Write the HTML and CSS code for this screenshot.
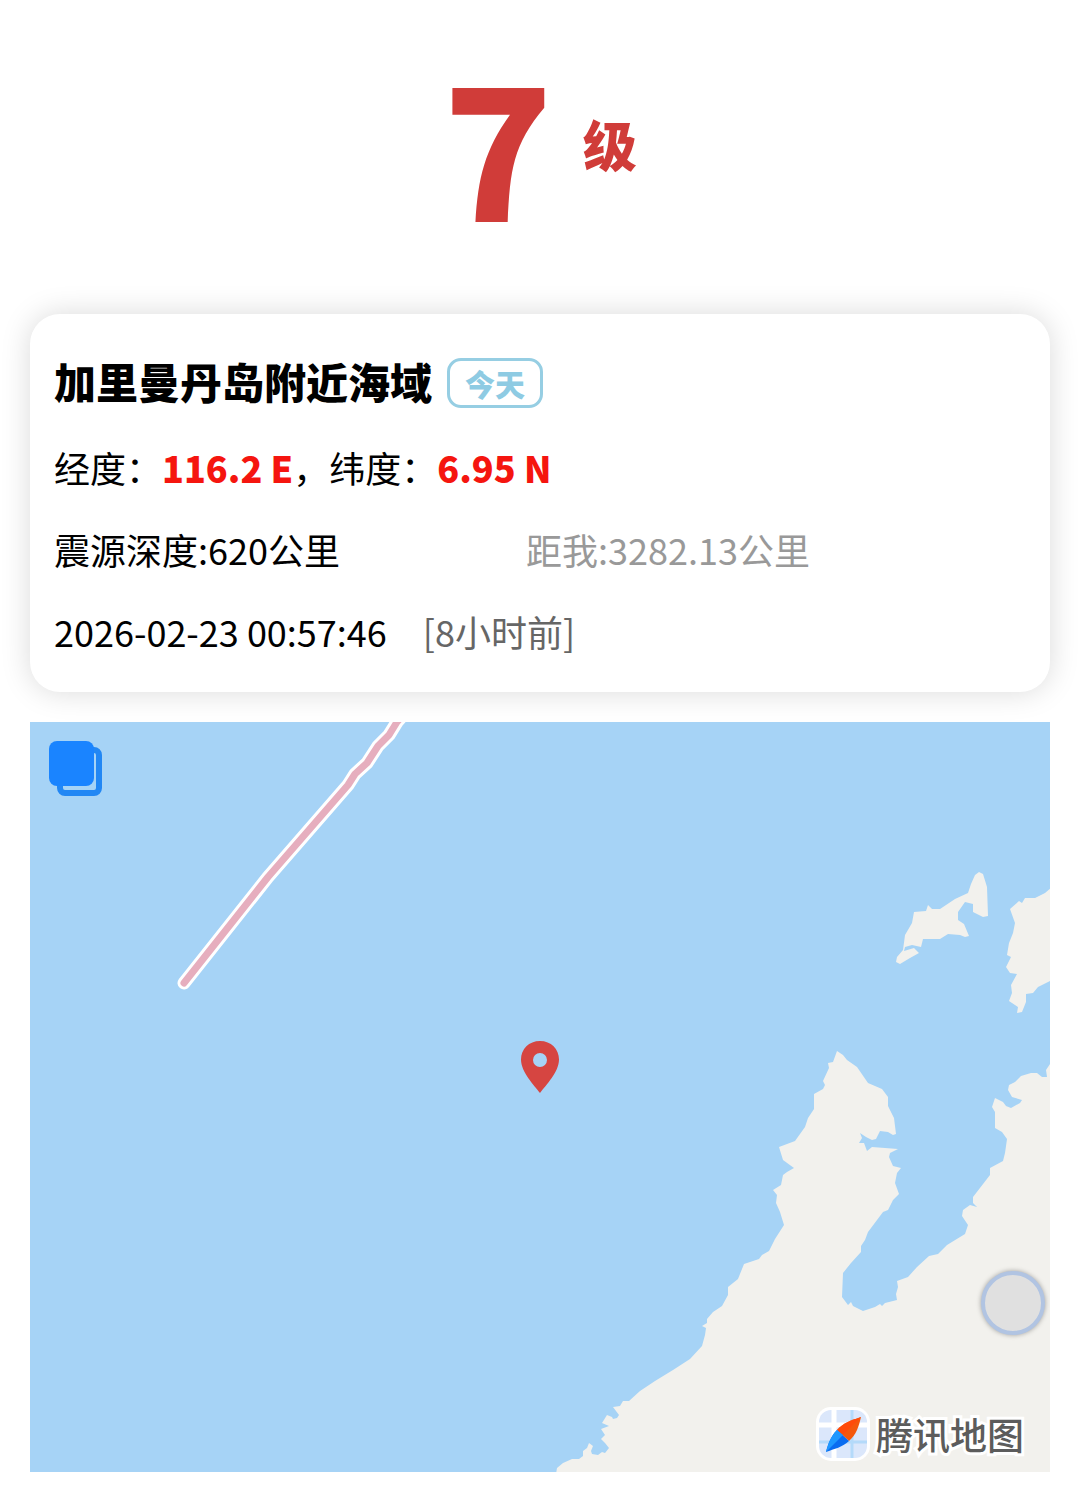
FILE: index.html
```html
<!DOCTYPE html>
<html lang="zh-CN">
<head>
  <meta charset="UTF-8">
  <meta name="viewport" content="width=device-width, initial-scale=1">
  <title>地震详情</title>
  <link rel="stylesheet" href="styles.css">
</head>
<body>

  <header class="level">
    <span class="level-num">7</span>
    <span class="level-unit">级</span>
  </header>

  <main>
    <section class="card">
      <div class="title-row">
        <h1>加里曼丹岛附近海域</h1>
        <span class="tag">今天</span>
      </div>
      <p>经度：<b>116.2 E</b>，纬度：<b>6.95 N</b></p>
      <p class="cols">
        <span>震源深度:620公里</span>
        <span class="distance">距我:3282.13公里</span>
      </p>
      <p class="time">
        <span>2026-02-23 00:57:46</span>
        <span class="ago">[8小时前]</span>
      </p>
    </section>

    <section class="map">
      <svg class="map-canvas" viewBox="30 722 1020 750" preserveAspectRatio="xMidYMid slice" aria-hidden="true">
        <!-- mainland -->
        <path class="land" d="M556 1474L557 1468L563 1463L572 1459L579 1459L583 1456L583 1451L587 1448L589 1443L593 1446L591 1451L592 1454L598 1455L602 1452L605 1453L609 1448L605 1443L601 1439L605 1435L601 1429L609 1426L602 1423L607 1415L612 1417L613 1419L617 1418L619 1415L613 1407L620 1406L623 1401L629 1401L640 1391L655 1381L673 1370L690 1359L702 1346L705 1335L706 1328L702 1326L707 1323L707 1319L713 1312L722 1306L728 1295L728 1287L738 1279L744 1264L759 1259L762 1255L769 1251L775 1239L784 1225L780 1212L776 1203L777 1195L773 1190L781 1185L783 1175L787 1172L794 1168L783 1160L779 1147L795 1141L805 1127L808 1118L814 1109L814 1094L823 1089L825 1085L823 1081L829 1068L828 1063L833 1062L837 1051L843 1055L847 1060L857 1067L868 1083L882 1089L888 1097L888 1106L894 1118L896 1134L893 1135L888 1132L880 1131L876 1139L872 1140L866 1137L860 1133L862 1138L859 1143L864 1143L867 1151L872 1147L898 1149L890 1153L889 1157L893 1166L901 1168L897 1173L895 1183L899 1194L893 1200L888 1210L883 1212L877 1220L868 1232L865 1240L861 1246L861 1252L851 1263L843 1273L842 1297L848 1305L851 1302L853 1306L863 1311L875 1307L880 1304L882 1306L885 1303L897 1300L896 1294L898 1287L897 1281L908 1277L917 1267L929 1256L938 1254L947 1245L965 1234L968 1225L962 1216L963 1210L970 1205L977 1207L973 1203L973 1197L990 1175L990 1168L1003 1161L1005 1153L1007 1139L1002 1132L995 1128L995 1112L992 1107L995 1098L1003 1102L1006 1106L1011 1108L1020 1103L1022 1100L1012 1097L1008 1090L1009 1085L1015 1082L1021 1076L1031 1073L1037 1073L1042 1077L1047 1077L1046 1070L1050 1064L1052 1474Z"/>
        <!-- islands -->
        <path class="land" d="M897 957L903 950L905 935L912 923L914 912L926 911L928 905L932 909L940 909L955 899L968 893L971 884L975 875L979 872L983 874L987 887L988 916L983 917L973 912L973 904L965 902L958 912L958 920L964 924L969 936L965 937L960 935L948 934L940 939L923 939L921 947L912 945L905 947L904 951L914 948L919 953L910 958L900 964L896 962Z"/>
        <path class="land" d="M1052 887L1045 893L1035 898L1025 898L1022 903L1019 901L1010 909L1015 923L1013 933L1009 943L1007 955L1011 957L1006 967L1010 973L1017 974L1011 985L1012 993L1009 1001L1018 1007L1017 1013L1022 1012L1026 1002L1026 994L1033 993L1038 987L1052 980Z"/>
        <g class="fault">
          <path class="fault-edge" d="M184 983L268 877L348 785L355 774L367 763L378 746L389 735L397 722L404 714"/>
          <path class="fault-line" d="M184 983L268 877L348 785L355 774L367 763L378 746L389 735L397 722L404 714"/>
        </g>
      </svg>

      <button class="layers" type="button" aria-label="切换图层">
        <svg viewBox="0 0 54 56" width="54" height="56">
          <rect x="11" y="9" width="39" height="43" rx="5" fill="none" stroke="#2287f4" stroke-width="6"/>
          <rect x="0" y="0" width="45" height="45" rx="8" fill="#1a84ff"/>
        </svg>
      </button>

      <svg class="pin" viewBox="0 0 38 52" width="38" height="52" aria-hidden="true">
        <path fill="#d64541" fill-rule="evenodd" d="M19 0C8 0 0 8 0 18.500C0 31 13 44 19 52C25 44 38 31 38 18.500C38 8 30 0 19 0ZM19 12A7 7 0 1 1 19 26A7 7 0 1 1 19 12Z"/>
      </svg>

      <button class="float-btn" type="button" aria-label="更多"></button>

      <div class="brand">
        <svg viewBox="0 0 54 54" width="54" height="54" aria-hidden="true">
          <defs>
            <clipPath id="tile"><rect x="3" y="3" width="48" height="48" rx="12"/></clipPath>
          </defs>
          <rect width="54" height="54" rx="15" fill="#fff"/>
          <g clip-path="url(#tile)">
            <rect width="54" height="54" fill="#dbe7fb"/>
            <path stroke="#fff" stroke-width="5" d="M18 0V54M0 18H54"/>
            <path stroke="#b4dafa" stroke-width="3" d="M36 0V54M0 35H54"/>
          </g>
          <path fill="#f4570c" d="M21 23C27 16 36 13 45 10C43 19 40 28 33 34Z"/>
          <path fill="#ff4a0a" d="M21 23C27 16 36 13 45 10L27 28Z"/>
          <path fill="#0a6cf0" d="M21 23L33 34C27 40 18 42 10 45C12 37 15 29 21 23Z"/>
          <path fill="#1e98ff" d="M21 23L27 28L10 45C12 37 15 29 21 23Z"/>
        </svg>
        <span>腾讯地图</span>
      </div>
    </section>
  </main>

</body>
</html>
```
FILE: styles.css
```css
* {
  box-sizing: border-box;
}

body {
  margin: 0;
  background-color: #fff;
  color: #000;
  font-family: "Noto Sans CJK SC", sans-serif;
  font-size: 36px;
}

.level {
  display: flex;
  align-items: center;
  justify-content: center;
  gap: 30px;
  height: 314px;
  padding-bottom: 26px;
  color: #d03c39;
  font-weight: 900;
}

.level-num {
  font-size: 180px;
  line-height: 200px;
}

.level-unit {
  font-size: 54px;
  line-height: 80px;
}

main {
  padding: 0 30px 32px;
}

.card {
  display: flex;
  flex-direction: column;
  gap: 30px;
  padding: 37px 24px 35px;
  border-radius: 30px;
  background-color: #fff;
  box-shadow: 0 0 30px rgba(0, 0, 0, 0.15);
}

.title-row {
  display: flex;
  align-items: center;
  gap: 15px;
}

h1 {
  margin: 0;
  font-size: 42px;
  font-weight: 900;
  line-height: 60px;
}

.tag {
  margin-top: 4px;
  padding: 0 15px;
  border: 3px solid #96cee3;
  border-radius: 14px;
  color: #8ecbe3;
  font-size: 30px;
  font-weight: 900;
  line-height: 44px;
}

.card p {
  margin: 0;
  line-height: 52px;
}

.card b {
  color: #f5150f;
  font-weight: 900;
}

.card .cols {
  display: grid;
  grid-template-columns: 17fr 18fr;
}

.distance {
  color: #999;
}

.time {
  display: flex;
  gap: 36px;
}

.ago {
  color: #666;
}

.map {
  position: relative;
  height: 750px;
  margin-top: 30px;
  background-color: #a6d3f6;
  overflow: hidden;
}

.map-canvas {
  display: block;
  width: 100%;
  height: 100%;
}

.land {
  fill: #f2f1ed;
}

.fault path {
  fill: none;
  stroke-linecap: round;
  stroke-linejoin: round;
}

.fault-edge {
  stroke: #fff;
  stroke-width: 13px;
}

.fault-line {
  stroke: #e6aebe;
  stroke-width: 7px;
}

button {
  padding: 0;
  border: none;
  background: none;
  cursor: pointer;
}

.layers {
  position: absolute;
  top: 19px;
  left: 19px;
}

.layers svg {
  display: block;
}

.pin {
  position: absolute;
  bottom: 379px;
  left: 50%;
  transform: translateX(-50%);
}

.float-btn {
  position: absolute;
  right: 5px;
  bottom: 137px;
  width: 64px;
  height: 64px;
  border: 4px solid #b1c4e2;
  border-radius: 50%;
  background-color: #e0e0e0;
  box-shadow: 0 0 5px rgba(0, 0, 0, 0.35);
}

.brand {
  position: absolute;
  right: 26px;
  bottom: 11px;
  display: flex;
  align-items: center;
  gap: 6px;
  color: #5c5c5c;
  font-size: 37px;
  font-weight: 500;
  line-height: 54px;
}

.brand span {
  -webkit-text-stroke: 6px #fff;
  paint-order: stroke fill;
}
```
